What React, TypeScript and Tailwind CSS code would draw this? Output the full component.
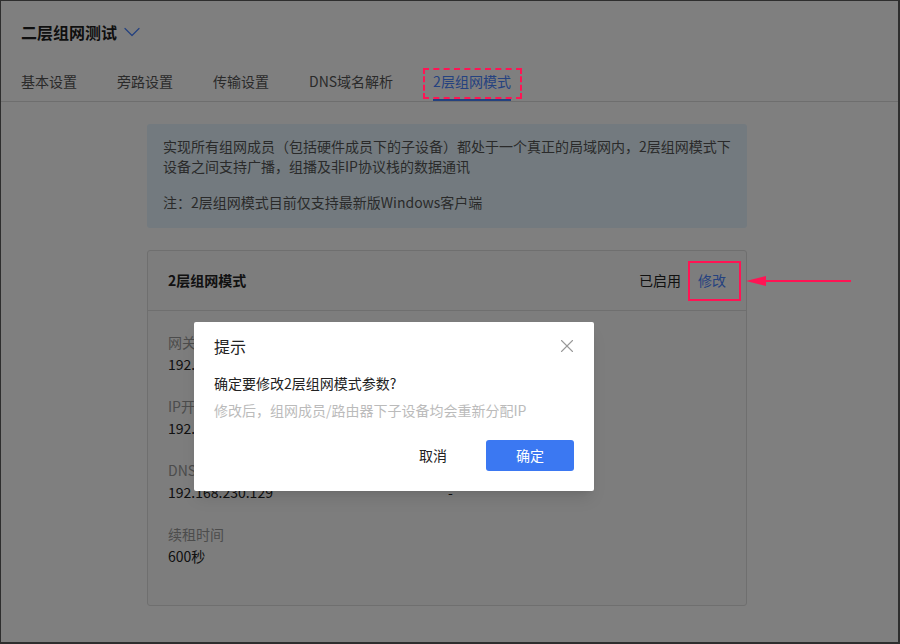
import React from 'react';
import { ChevronDown, X } from 'lucide-react';

const tabs = ['基本设置', '旁路设置', '传输设置', 'DNS域名解析', '2层组网模式'];

const fields = [
  { label: '网关地址', value: '192.168.230.1', label2: '子网掩码', value2: '255.255.255.0' },
  { label: 'IP开始地址', value: '192.168.230.100', label2: 'IP结束地址', value2: '192.168.230.200' },
  { label: 'DNS服务器', value: '192.168.230.129', label2: '备用DNS', value2: '-' },
  { label: '续租时间', value: '600秒' },
];

export default function App() {
  return (
    <div
      className="relative w-[900px] h-[644px] overflow-hidden bg-white border-l border-t border-r-2 border-b-2 border-[#2e2e2e] text-[14px] text-[#333]"
      style={{ fontFamily: '"Noto Sans CJK SC", "Noto Sans", sans-serif' }}
    >
      {/* Header */}
      <div className="px-5 pt-[19px]">
        <div className="flex items-center h-6">
          <span className="text-[16px] font-bold text-[#1f1f1f] leading-6">二层组网测试</span>
          <ChevronDown size={28} strokeWidth={1.1} className="text-[#4a84ff] ml-px" />
        </div>
      </div>

      {/* Tabs */}
      <div className="mt-[27px] border-b border-[#dcdcdc]">
        <div className="flex gap-10 px-5">
          {tabs.map((t, i) => (
            <div
              key={t}
              className={
                i === tabs.length - 1
                  ? 'leading-5 pb-[8px] border-b-2 border-[#4a84ff] text-[#4a84ff]'
                  : 'leading-5 pb-[10px] text-[#555]'
              }
            >
              {t}
            </div>
          ))}
        </div>
      </div>

      {/* Main */}
      <div className="w-[600px] ml-[146px] mt-[22px]">
        <div className="bg-[#e6f5ff] rounded-[3px] px-4 pt-3 pb-4 leading-5 text-[#555]">
          <p>实现所有组网成员（包括硬件成员下的子设备）都处于一个真正的局域网内，2层组网模式下设备之间支持广播，组播及非IP协议栈的数据通讯</p>
          <p className="mt-4">注：2层组网模式目前仅支持最新版Windows客户端</p>
        </div>

        <div className="mt-[22px] border border-[#dedede] rounded-[3px] bg-[#fafafa]">
          <div className="h-[60px] px-5 flex items-center justify-between border-b border-[#dedede]">
            <span className="font-bold text-[#222]">2层组网模式</span>
            <div className="flex items-center gap-[17px]">
              <span className="text-[#222]">已启用</span>
              <span className="text-[#4a84ff]">修改</span>
            </div>
          </div>
          <div className="px-5 pt-[21px] pb-[39px] grid grid-cols-[280px_1fr] gap-y-[22px]">
            {fields.map((f) => (
              <React.Fragment key={f.label}>
                <div>
                  <div className="leading-5 text-[#999]">{f.label}</div>
                  <div className="leading-5 mt-[2px] text-[#222]">{f.value}</div>
                </div>
                <div>
                  {f.label2 && (
                    <>
                      <div className="leading-5 text-[#999]">{f.label2}</div>
                      <div className="leading-5 mt-[2px] text-[#222]">{f.value2}</div>
                    </>
                  )}
                </div>
              </React.Fragment>
            ))}
          </div>
        </div>
      </div>

      {/* Overlay + dialog */}
      <div className="absolute inset-0 bg-black/50">
        <div className="absolute left-[193px] top-[321px] w-[400px] bg-white rounded-[2px] shadow-lg px-5 pt-[12px] pb-5">
          <div className="flex items-center justify-between h-6">
            <span className="text-[16px] text-[#222]">提示</span>
            <X size={22} strokeWidth={1.2} className="text-[#999] mr-[-4px]" />
          </div>
          <div className="mt-[15px] leading-5 text-[#222]">确定要修改2层组网模式参数?</div>
          <div className="mt-[7px] leading-5 text-[#bbb]">修改后，组网成员/路由器下子设备均会重新分配IP</div>
          <div className="mt-[20px] flex justify-end items-center gap-[9px]">
            <button className="w-[88px] h-[31px] text-[#222]">取消</button>
            <button className="w-[88px] h-[31px] rounded-[3px] bg-[#3b78f2] text-white">确定</button>
          </div>
        </div>
      </div>

      {/* Annotations */}
      <div className="absolute left-[422px] top-[67px] w-[99px] h-[31px] border-2 border-dashed border-[#ff1454]" />
      <div className="absolute left-[687px] top-[260px] w-[53px] h-[40px] border-2 border-[#ff1454]" />
      <svg className="absolute left-[744px] top-[272px]" width="110" height="16" viewBox="0 0 110 16">
        <line x1="18" y1="8" x2="106" y2="8" stroke="#ff1454" strokeWidth="2" />
        <polygon points="1,8 21,3 21,13" fill="#ff1454" />
      </svg>
    </div>
  );
}
